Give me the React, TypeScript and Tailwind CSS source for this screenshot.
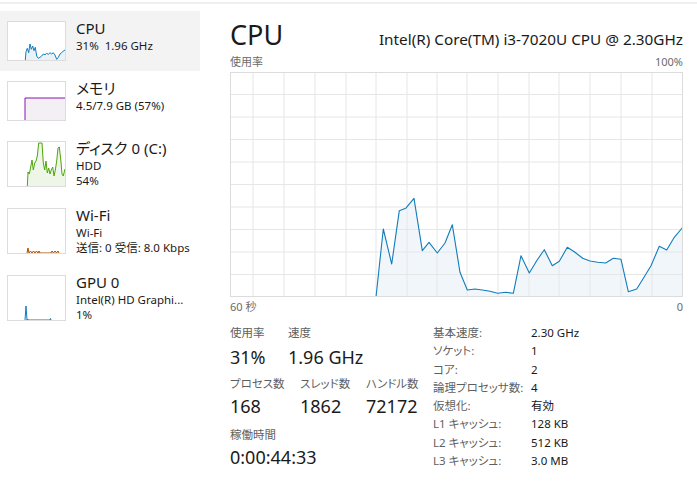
import { FC } from 'react';

type Pt = [number, number];

const toPath = (pts: Pt[]) => pts.map(([x, y], i) => `${i ? 'L' : 'M'}${x} ${y}`).join(' ');

const area = (pts: Pt[], bottom: number) => {
  const first = pts[0];
  const last = pts[pts.length - 1];
  return `${toPath(pts)} L${last[0]} ${bottom} L${first[0]} ${bottom} Z`;
};

// main chart samples, chart space 453 x 225
const cpuPoints: Pt[] = [
  [146, 225], [153.3, 157], [161.7, 192], [169.3, 138.7], [175.7, 136.3], [184, 126.3],
  [192.3, 178.7], [199, 170.3], [207.3, 181], [215, 171], [222.3, 152.7], [230, 200.3],
  [237.3, 218], [245, 217], [252.3, 218], [260, 219.3], [267.7, 221.3], [275.7, 220.3],
  [283.3, 221.3], [291, 183.7], [299.3, 201], [306.7, 188.7], [314.3, 177.7], [322.3, 193.7],
  [329.3, 189.3], [337.3, 175.3], [345, 180.3], [352.7, 186.3], [360, 189], [367.7, 190.3],
  [375.7, 191], [383.3, 186.3], [391, 187.3], [398.3, 219.7], [406.7, 217], [414, 205.3],
  [421, 193.7], [429.3, 174.3], [436.7, 178], [444.3, 165.3], [453, 155],
];

const vLines = [23, 54, 85, 116, 146, 177, 207, 237, 268, 299, 329, 360, 391, 422];
const hLines = [22.5, 45, 67.5, 90, 112.5, 135, 157.5, 180, 202.5];

const CpuChart: FC = () => (
  <svg width="453" height="225" viewBox="0 0 453 225" className="block">
    <path d={area(cpuPoints, 225)} fill="#f1f6fa" />
    {vLines.map((x) => (
      <line key={`v${x}`} x1={x} y1={0} x2={x} y2={225} stroke="#e6e6e6" strokeWidth="1" />
    ))}
    {hLines.map((y) => (
      <line key={`h${y}`} x1={0} y1={y} x2={453} y2={y} stroke="#e6e6e6" strokeWidth="1" />
    ))}
    <path d={toPath(cpuPoints)} fill="none" stroke="#117dbb" strokeWidth="1.1" strokeLinejoin="round" />
    <rect x="0.5" y="0.5" width="452" height="224" fill="none" stroke="#dcdcdc" />
  </svg>
);

// sidebar sparklines, inner space 57 x H
type Spark = { pts: Pt[]; color: string; fill?: string };

const sparks: Record<string, Spark> = {
  cpu: {
    color: '#117dbb',
    fill: '#eaf2f8',
    pts: [
      [17.3, 38], [18, 29.7], [19.3, 26.3], [20.7, 30.7], [22, 22], [23.3, 27.3], [24.7, 24],
      [26, 28.7], [27.3, 25.3], [28.7, 34], [30.3, 36.3], [32, 35.3], [33.7, 34], [35.3, 32],
      [37, 32.7], [38.7, 31.3], [40.3, 32.3], [42, 30.7], [43.7, 32], [45.3, 30.7], [47, 33],
      [48.7, 37.3], [50.3, 35.3], [52, 32], [53.7, 30.7], [55.3, 29], [57, 28],
    ],
  },
  mem: {
    color: '#8b12ae',
    fill: '#f3eff4',
    pts: [[17, 38], [17, 16], [57, 16]],
  },
  disk: {
    color: '#4da60c',
    fill: '#eef6e8',
    pts: [
      [19.3, 44], [20, 30], [21.3, 32], [22.7, 25], [24, 18], [25.3, 28], [26.7, 21], [28, 19],
      [29.3, 14], [30.7, 1], [34, 1], [35.3, 21], [36.7, 28], [38, 19], [39.3, 31], [40.7, 26],
      [42, 32], [43.3, 28], [44.7, 25], [46, 34], [47.3, 28], [48.7, 19], [50, 6], [51.3, 5],
      [52.7, 17], [54, 32], [55.3, 34], [56.7, 28], [57, 27],
    ],
  },
  wifi: {
    color: '#a74f01',
    pts: [
      [19, 44], [20, 39], [21, 44], [22.5, 42], [24, 44], [25.5, 42], [27, 44], [28.5, 42],
      [30, 44], [31, 42], [32, 44], [43, 44], [44, 42], [45.5, 44], [47, 42], [48.5, 44],
      [50, 42], [51, 44],
    ],
  },
  gpu: {
    color: '#117dbb',
    pts: [[17, 44], [18, 30], [19, 44], [19.5, 43], [20, 44], [42, 44], [42.5, 42.5], [43, 44]],
  },
};

const Thumb: FC<{ spark: Spark; h: number }> = ({ spark, h }) => (
  <div className="shrink-0 border border-[#dcdcdc] bg-white" style={{ height: h }}>
    <svg width="57" height={h - 2} viewBox={`0 0 57 ${h - 2}`} className="block">
      {spark.fill && <path d={area(spark.pts, h - 2)} fill={spark.fill} />}
      <path d={toPath(spark.pts)} fill="none" stroke={spark.color} strokeWidth="1" strokeLinejoin="round" />
    </svg>
  </div>
);

type NavItem = { key: string; title: string; lines: string[]; active?: boolean };

const navItems: NavItem[] = [
  { key: 'cpu', title: 'CPU', lines: ['31%  1.96 GHz'], active: true },
  { key: 'mem', title: 'メモリ', lines: ['4.5/7.9 GB (57%)'] },
  { key: 'disk', title: 'ディスク 0 (C:)', lines: ['HDD', '54%'] },
  { key: 'wifi', title: 'Wi-Fi', lines: ['Wi-Fi', '送信: 0 受信: 8.0 Kbps'] },
  { key: 'gpu', title: 'GPU 0', lines: ['Intel(R) HD Graphi...', '1%'] },
];

const SideItem: FC<{ item: NavItem }> = ({ item }) => {
  const thumbH = item.lines.length > 1 ? 46 : 40;
  return (
    <div className={`flex gap-[10px] py-[10px] pl-[7px] ${item.active ? 'bg-[#f3f3f3]' : ''}`}>
      <Thumb spark={sparks[item.key]} h={thumbH} />
      <div className="flex flex-col text-[#1a1a1a]">
        <div className="mb-[2px] text-[15px] leading-[15px]">{item.title}</div>
        {item.lines.map((l) => (
          <div key={l} className="whitespace-pre text-[11.5px] leading-[15px]">
            {l}
          </div>
        ))}
      </div>
    </div>
  );
};

const specs: [string, string][] = [
  ['基本速度:', '2.30 GHz'],
  ['ソケット:', '1'],
  ['コア:', '2'],
  ['論理プロセッサ数:', '4'],
  ['仮想化:', '有効'],
  ['L1 キャッシュ:', '128 KB'],
  ['L2 キャッシュ:', '512 KB'],
  ['L3 キャッシュ:', '3.0 MB'],
];

const Stat: FC<{ label: string; value: string; w: string; vh: string }> = ({ label, value, w, vh }) => (
  <div className={w}>
    <div className="text-[11.5px] leading-[18px] text-[#5f5f5f]">{label}</div>
    <div className={`text-[18px] text-[#1a1a1a] ${vh}`}>{value}</div>
  </div>
);

const App: FC = () => {
  return (
    <div className="h-[485px] w-[697px] overflow-hidden bg-white font-['Noto_Sans','Noto_Sans_CJK_JP',sans-serif] [font-feature-settings:'palt']">
      <div className="mt-[2px] h-[2px] bg-[#efefef]" />
      <div className="flex pt-[7px]">
        <aside className="flex w-[200px] shrink-0 flex-col">
          {navItems.map((item) => (
            <SideItem key={item.key} item={item} />
          ))}
        </aside>

        <main className="flex w-[483px] flex-col pl-[30px]">
          <div className="flex h-[41px] items-baseline justify-between pt-[7px]">
            <h1 className="text-[27px] leading-[34px] text-[#1a1a1a]">CPU</h1>
            <div className="text-[15.3px] text-[#1a1a1a]">Intel(R) Core(TM) i3-7020U CPU @ 2.30GHz</div>
          </div>
          <div className="flex h-[20px] items-center justify-between text-[11px] text-[#6b6b6b]">
            <span>使用率</span>
            <span>100%</span>
          </div>
          <CpuChart />
          <div className="flex h-[20px] items-center justify-between text-[11px] text-[#6b6b6b]">
            <span>60 秒</span>
            <span>0</span>
          </div>

          <div className="mt-[7px] flex">
            <div className="w-[203px] shrink-0">
              <div className="flex">
                <Stat label="使用率" value="31%" w="w-[58px]" vh="leading-[30px]" />
                <Stat label="速度" value="1.96 GHz" w="w-[120px]" vh="leading-[30px]" />
              </div>
              <div className="mt-[3px] flex">
                <Stat label="プロセス数" value="168" w="w-[70px]" vh="leading-[26px]" />
                <Stat label="スレッド数" value="1862" w="w-[66px]" vh="leading-[26px]" />
                <Stat label="ハンドル数" value="72172" w="w-[66px]" vh="leading-[26px]" />
              </div>
              <div className="mt-[7px]">
                <Stat label="稼働時間" value="0:00:44:33" w="w-[150px]" vh="leading-[26px]" />
              </div>
            </div>
            <div className="grid grid-cols-[98px_1fr] text-[11.5px] leading-[18px]">
              {specs.map(([k, v]) => (
                <div key={k} className="contents">
                  <span className="text-[#5f5f5f]">{k}</span>
                  <span className="text-[#1a1a1a]">{v}</span>
                </div>
              ))}
            </div>
          </div>
        </main>
      </div>
    </div>
  );
};

export default App;
